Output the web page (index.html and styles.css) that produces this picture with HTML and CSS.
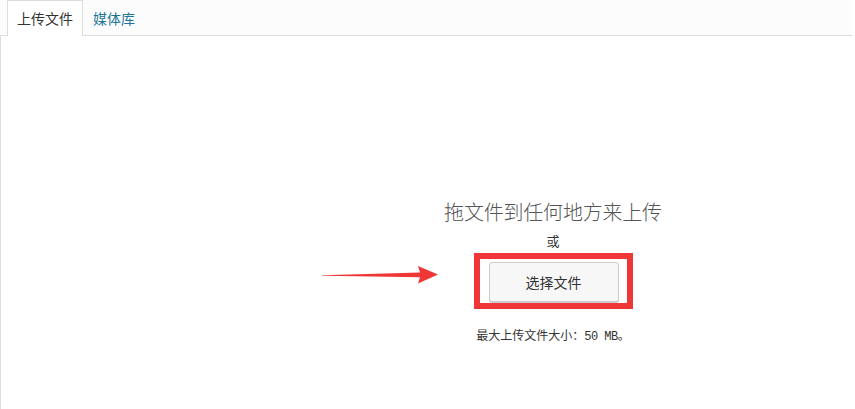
FILE: index.html
```html
<!DOCTYPE html>
<html lang="zh-CN">
<head>
    <meta charset="UTF-8">
    <meta name="viewport" content="width=device-width, initial-scale=1.0">
    <title>上传文件</title>
    <link rel="stylesheet" href="styles.css">
</head>
<body>
    <div class="tabs">
        <a class="tab active" href="#">上传文件</a>
        <a class="tab" href="#">媒体库</a>
    </div>
    <div class="panel">
        <div class="uploader">
            <p class="drop-title">拖文件到任何地方来上传</p>
            <p class="or">或</p>
            <div class="highlight">
                <svg class="arrow" width="120" height="20" viewBox="0 0 120 20">
                    <polygon points="2,10.2 100,7.6 98,1 118,9.4 98,18.5 100,12.2 2,10.8"></polygon>
                </svg>
                <button class="select-btn">选择文件</button>
            </div>
            <p class="max-size">最大上传文件大小：<span class="mono">50 MB</span>。</p>
        </div>
    </div>
</body>
</html>
```

FILE: styles.css
```css
body {
    margin: 0;
    background-color: #fff;
    font-family: 'Noto Sans CJK SC', 'Noto Sans', sans-serif;
    color: #333;
}

.tabs {
    display: flex;
    width: 845px;
    height: 35px;
    padding-left: 7px;
    border-bottom: 1px solid #ddd;
    background-color: #fcfcfc;
}

.tab {
    display: block;
    padding: 0 9px;
    line-height: 35px;
    font-size: 14px;
    color: #21759b;
    text-decoration: none;
    border: 1px solid transparent;
    border-bottom: none;
}

.tab.active {
    color: #333;
    background-color: #fff;
    border-color: #ddd;
    margin-bottom: -1px;
    height: 35px;
}

.panel {
    height: 373px;
    border-left: 1px solid #ddd;
    padding-left: 253px;
    width: 598px;
}

.uploader {
    display: flex;
    flex-direction: column;
    align-items: center;
    padding-top: 162px;
}

.uploader p {
    margin: 0;
}

.drop-title {
    font-size: 20px;
    line-height: 28px;
    font-weight: 300;
    color: #555;
    letter-spacing: -0.2px;
}

.or {
    margin-top: 6px !important;
    font-size: 13px;
    line-height: 18px;
    color: #333;
}

.highlight {
    position: relative;
    margin-top: 3px;
    padding: 3px 8px 1px 9px;
    border: 6px solid #ef3737;
}

.arrow {
    position: absolute;
    left: -160px;
    top: 6px;
}

.arrow polygon {
    fill: #ef3737;
}

.select-btn {
    display: block;
    width: 130px;
    height: 40px;
    font-family: inherit;
    font-size: 14px;
    color: #333;
    background-color: #f7f7f7;
    border: 1px solid #ccc;
    border-radius: 3px;
    box-shadow: 0 1px 0 #ccc;
    cursor: pointer;
}

.max-size {
    margin-top: 18px !important;
    font-size: 12px;
    line-height: 16px;
    color: #333;
}

.mono {
    font-family: 'Liberation Mono', monospace;
    letter-spacing: -0.5px;
}
```
